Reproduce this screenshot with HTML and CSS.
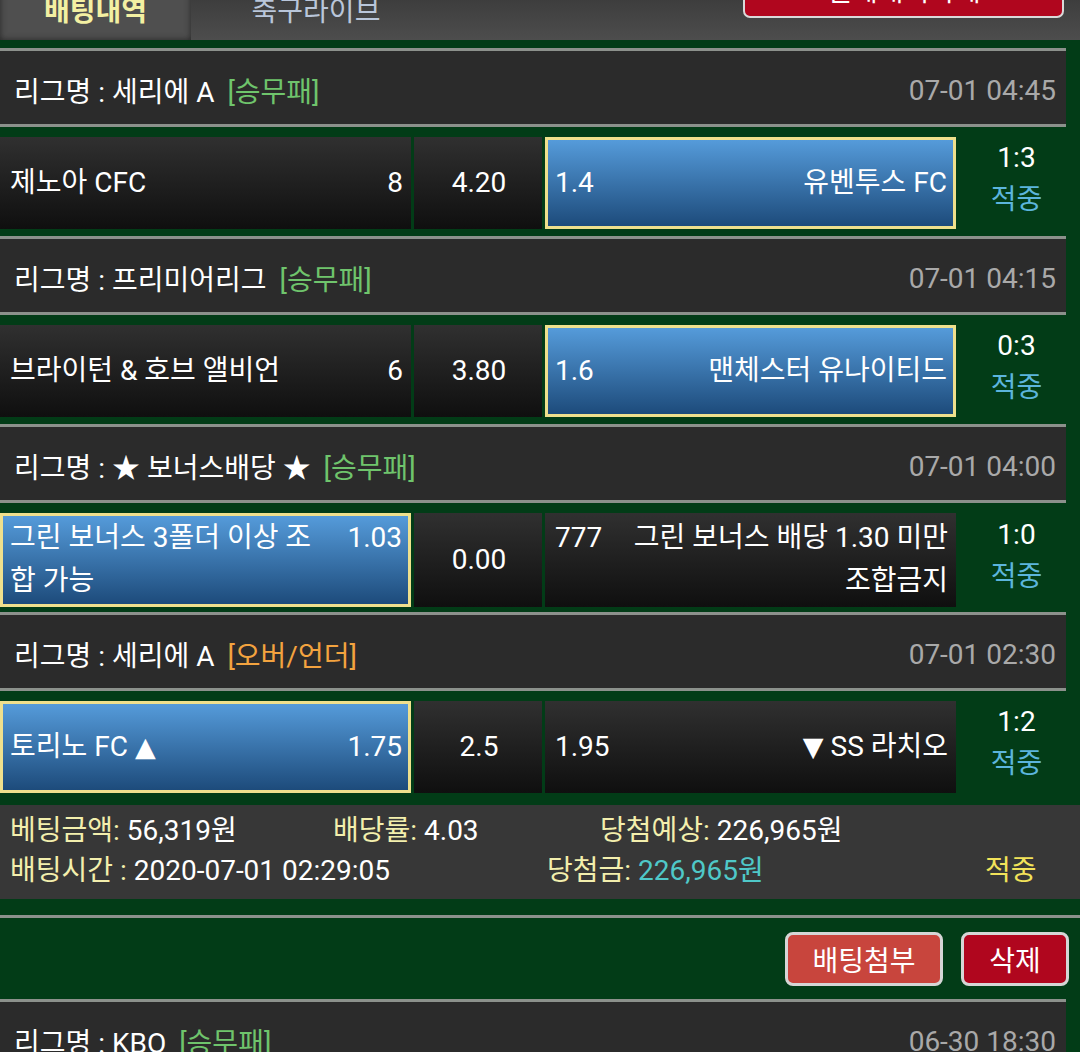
FILE: index.html
```html
<!DOCTYPE html>
<html lang="ko">
<head>
    <meta charset="UTF-8">
    <meta name="viewport" content="width=device-width, initial-scale=1.0">
    <title>배팅내역</title>
    <link rel="stylesheet" href="styles.css">
</head>
<body>
    <div class="tabs">
        <div class="tab active">배팅내역</div>
        <div class="tab">축구라이브</div>
        <button class="btn-top">전체내역삭제</button>
    </div>

    <div class="bet">
        <div class="league">
            <span>리그명 : 세리에 A <em class="type">[승무패]</em></span>
            <span class="time">07-01 04:45</span>
        </div>
        <div class="match">
            <div class="cell"><div class="line"><span class="name">제노아 CFC</span><span>8</span></div></div>
            <div class="cell mid">4.20</div>
            <div class="cell picked"><div class="line"><span>1.4</span><span class="name right">유벤투스 FC</span></div></div>
            <div class="result"><span>1:3</span><span class="hit">적중</span></div>
        </div>

        <div class="league">
            <span>리그명 : 프리미어리그 <em class="type">[승무패]</em></span>
            <span class="time">07-01 04:15</span>
        </div>
        <div class="match">
            <div class="cell"><div class="line"><span class="name">브라이턴 &amp; 호브 앨비언</span><span>6</span></div></div>
            <div class="cell mid">3.80</div>
            <div class="cell picked"><div class="line"><span>1.6</span><span class="name right">맨체스터 유나이티드</span></div></div>
            <div class="result"><span>0:3</span><span class="hit">적중</span></div>
        </div>

        <div class="league">
            <span>리그명 : ★ 보너스배당 ★ <em class="type">[승무패]</em></span>
            <span class="time">07-01 04:00</span>
        </div>
        <div class="match">
            <div class="cell picked"><div class="line"><span class="name wrap">그린 보너스 3폴더 이상 조합 가능</span><span>1.03</span></div></div>
            <div class="cell mid">0.00</div>
            <div class="cell"><div class="line"><span>777</span><span class="name right">그린 보너스 배당 1.30 미만 조합금지</span></div></div>
            <div class="result"><span>1:0</span><span class="hit">적중</span></div>
        </div>

        <div class="league">
            <span>리그명 : 세리에 A <em class="type ou">[오버/언더]</em></span>
            <span class="time">07-01 02:30</span>
        </div>
        <div class="match">
            <div class="cell picked"><div class="line"><span class="name">토리노 FC <i class="arrow">▲</i></span><span>1.75</span></div></div>
            <div class="cell mid">2.5</div>
            <div class="cell"><div class="line"><span>1.95</span><span class="name right"><i class="arrow">▼</i> SS 라치오</span></div></div>
            <div class="result"><span>1:2</span><span class="hit">적중</span></div>
        </div>

        <div class="summary">
            <div class="sum-row first">
                <span><b>베팅금액:</b> 56,319원</span>
                <span><b>배당률:</b> 4.03</span>
                <span><b>당첨예상:</b> 226,965원</span>
            </div>
            <div class="sum-row second">
                <span><b>배팅시간 :</b> 2020-07-01 02:29:05</span>
                <span><b>당첨금:</b> <em class="won">226,965원</em></span>
                <span class="status">적중</span>
            </div>
        </div>

        <div class="actions">
            <button class="btn attach">배팅첨부</button>
            <button class="btn delete">삭제</button>
        </div>
    </div>

    <div class="bet">
        <div class="league">
            <span>리그명 : KBO <em class="type">[승무패]</em></span>
            <span class="time">06-30 18:30</span>
        </div>
    </div>
</body>
</html>
```

FILE: styles.css
```css
body {
    margin: 0;
    background-color: #023c17;
    color: white;
    font-family: Roboto, "Noto Sans CJK KR", sans-serif;
    font-size: 28px;
    overflow: hidden;
}
em, i, b {
    font-style: normal;
    font-weight: normal;
}
.tabs {
    display: flex;
    height: 80px;
    margin-top: -40px;
    background: linear-gradient(#2e2e2e, #4d4d4d);
}
.tab {
    width: 191px;
    padding-top: 18px;
    display: flex;
    align-items: center;
    justify-content: center;
    font-size: 28px;
    color: #b9c6da;
}
.tab.active {
    background: #4f4f4f;
    box-shadow: inset 0 0 6px #262626;
    color: #f3f0a2;
    font-weight: bold;
}
.tab + .tab {
    width: 250px;
}
.btn-top {
    margin: 6px 16px 0 auto;
    width: 321px;
    height: 52px;
    padding-bottom: 8px;
    border: 2px solid #d9d9d9;
    border-radius: 7px;
    background: #b0061e;
    color: white;
    font-family: inherit;
    font-size: 28px;
}
.bet {
    padding-top: 8px;
}
.bet + .bet {
    padding-top: 0;
}
.league {
    display: flex;
    justify-content: space-between;
    align-items: center;
    box-sizing: border-box;
    height: 79px;
    margin-right: 14px;
    padding: 5px 10px 0 14px;
    background: #2b2b2b;
    border-top: 3px solid #8c918c;
    border-bottom: 3px solid #8c918c;
}
.type {
    margin-left: 6px;
    color: #6fc46c;
}
.type.ou {
    color: #f3a33f;
}
.time {
    color: #a9a9a9;
}
.match {
    display: grid;
    grid-template-columns: 411px 128px 411px 1fr;
    column-gap: 3px;
    height: 91px;
    margin: 10px 0 8px;
}
.cell {
    display: flex;
    align-items: center;
    padding: 0 8px 2px 10px;
    background: linear-gradient(#303030, #0f0f0f);
    line-height: 43px;
}
.cell.mid {
    justify-content: center;
}
.cell.picked {
    background: linear-gradient(#559bda, #1d4b7b);
    border: 3px solid #efe08d;
    padding: 0 6px 2px 7px;
}
.line {
    display: flex;
    align-items: baseline;
    justify-content: space-between;
    width: 100%;
    gap: 22px;
}
.name {
    flex: 1;
}
.name.right {
    text-align: right;
    word-break: keep-all;
}
.name.wrap {
    word-break: break-all;
}
.arrow {
    font-family: "DejaVu Sans", sans-serif;
    font-size: 27px;
}
.result {
    display: flex;
    flex-direction: column;
    align-items: center;
    justify-content: center;
    padding: 0 6px 8px 0;
    line-height: 42px;
}
.hit {
    color: #5cb5dc;
}
.summary {
    margin-top: 13px;
    padding: 6px 10px 8px;
    background: #373737;
    line-height: 40px;
}
.summary b {
    color: #f3efad;
}
.sum-row {
    display: grid;
}
.sum-row.first {
    grid-template-columns: 323px 267px 1fr;
}
.sum-row.second {
    grid-template-columns: 537px 438px 1fr;
}
.won {
    color: #4fc8c8;
}
.status {
    color: #f2e35a;
}
.actions {
    display: flex;
    justify-content: flex-end;
    gap: 18px;
    margin-top: 16px;
    padding: 14px 11px 13px 0;
    border-top: 3px solid #8c918c;
}
.btn {
    height: 54px;
    border: 3px solid #d6d6d6;
    border-radius: 8px;
    color: white;
    font-family: inherit;
    font-size: 28px;
}
.btn.attach {
    width: 158px;
    background: #c8453d;
}
.btn.delete {
    width: 108px;
    background: #b0061e;
}
```
